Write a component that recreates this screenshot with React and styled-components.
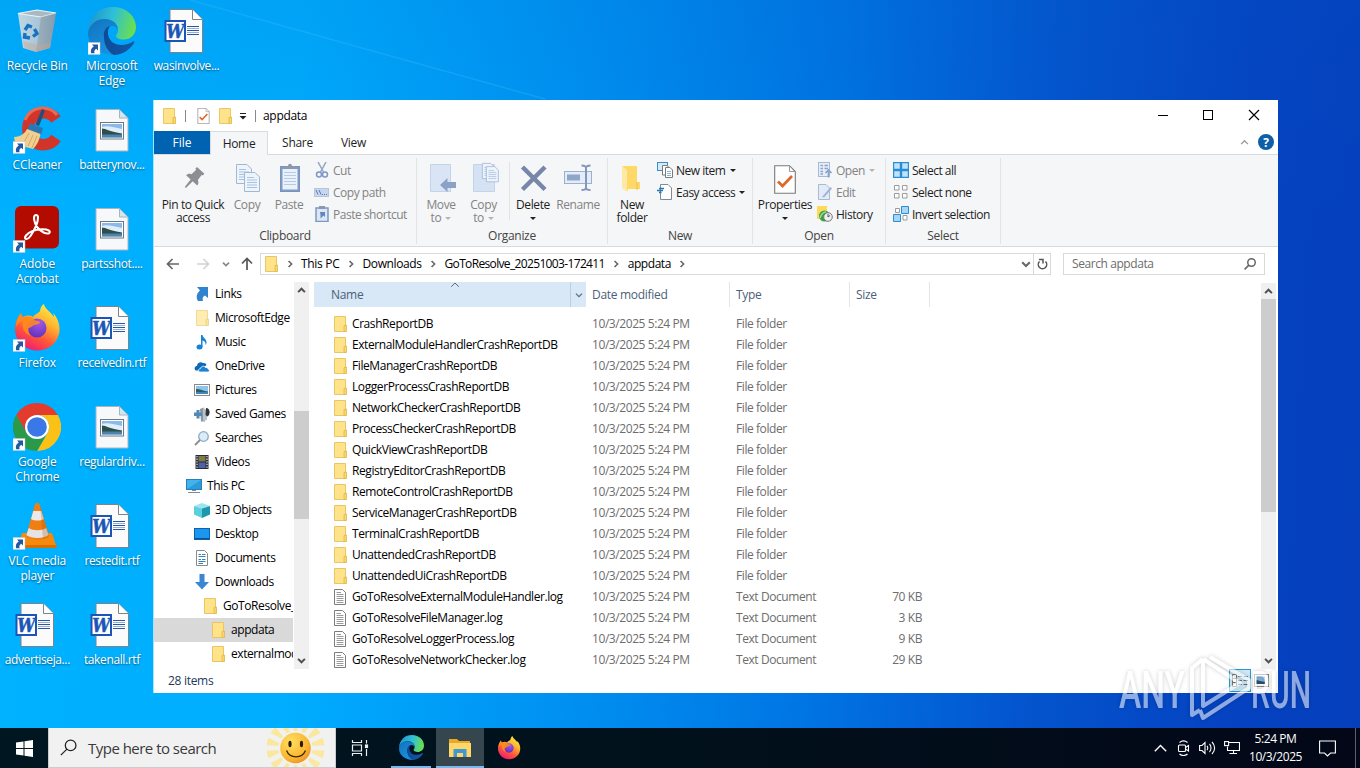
import React from 'react';
import styled, { createGlobalStyle, css } from 'styled-components';

const colors = {
  ribbon: '#f5f6f7',
  line: '#dadbdc',
  text: '#1e1e1e',
  muted: '#6d6d6d',
  disabled: '#838383',
  track: '#f0f0f0',
  thumb: '#cdcdcd',
  fileTab: '#0063b1',
};

const GlobalStyle = createGlobalStyle`
  * { box-sizing: border-box; }
  body {
    margin: 0;
    overflow: hidden;
    font-family: 'Open Sans', 'Noto Sans', sans-serif;
    font-size: 12px;
    letter-spacing: -0.42px;
  }
  svg { display: block; flex: none; }
`;

/* ---------- desktop ---------- */

const Screen = styled.div`
  position: relative;
  width: 1360px;
  height: 768px;
  overflow: hidden;
  display: flex;
  flex-direction: column;
  background:
    linear-gradient(180deg, rgba(0, 90, 190, 0.14), rgba(0, 90, 190, 0) 30%),
    linear-gradient(93deg, #00b2ff 0%, #00aeff 22%, #0092f2 42%, #0075e4 60%, #0454ce 76%, #0543c2 90%, #053fbc 100%);
`;

const Beam = styled.svg`
  position: absolute;
  left: 0;
  top: 0;
`;

const IconGrid = styled.div`
  flex: 1;
  display: grid;
  grid-template-rows: repeat(7, 99px);
  grid-auto-columns: 74.6px;
  grid-auto-flow: column;
  align-content: start;
`;

const DesktopItem = styled.div`
  display: flex;
  flex-direction: column;
  align-items: center;
  padding-top: 7px;
`;

const DesktopLabel = styled.div`
  margin-top: 3px;
  color: #fff;
  line-height: 15px;
  text-align: center;
  white-space: pre;
  letter-spacing: ${p => (p.$tight ? -0.38 : -0.15)}px;
  text-shadow: 0 1px 2px rgba(0, 0, 0, 0.55);
`;

/* ---------- window ---------- */

const Window = styled.div`
  position: absolute;
  left: 153px;
  top: 100px;
  width: 1125px;
  height: 593px;
  display: flex;
  flex-direction: column;
  background: #fff;
  border-left: 1px solid #a5e5ff;
  color: #000;
`;

const TitleBar = styled.div`
  height: 31px;
  display: flex;
  align-items: center;
  padding-left: 9px;
`;

const TitleSep = styled.div`
  width: 1px;
  height: 12px;
  background: #8a8a8a;
  margin: 0 ${p => p.$after}px 0 ${p => p.$before}px;
`;

const TitleText = styled.div`
  flex: 1;
  letter-spacing: -0.3px;
`;

const TabRow = styled.div`
  height: 24px;
  display: flex;
  border-bottom: 1px solid ${colors.line};
  color: ${colors.text};
`;

const Tab = styled.div`
  width: ${p => p.$width}px;
  line-height: 24px;
  text-align: center;
  letter-spacing: -0.3px;
  ${p =>
    p.$file &&
    css`
      height: 23px;
      background: ${colors.fileTab};
      color: #fff;
      letter-spacing: 0;
    `}
  ${p =>
    p.$active &&
    css`
      background: ${colors.ribbon};
      border: 1px solid ${colors.line};
      border-bottom: 0;
      line-height: 23px;
      height: 24px;
    `}
`;

const TabTools = styled.div`
  margin-left: auto;
  display: flex;
  align-items: center;
  gap: 9px;
  padding: 0 4px 1px 0;
`;

const Ribbon = styled.div`
  height: 92px;
  display: flex;
  background: ${colors.ribbon};
  border-bottom: 1px solid ${colors.line};
  padding-top: 3px;
`;

const Group = styled.div`
  width: ${p => p.$width}px;
  height: 86px;
  display: flex;
  flex-direction: column;
  border-right: 1px solid #e2e3e4;
`;

const GroupBody = styled.div`
  display: flex;
  height: 71px;
  padding-left: ${p => p.$pad}px;
`;

const GroupLabel = styled.div`
  text-align: center;
  line-height: 16px;
  padding-top: 2px;
  color: #444;
  letter-spacing: -0.3px;
`;

const BigButton = styled.div`
  width: ${p => p.$width}px;
  display: flex;
  flex-direction: column;
  align-items: center;
  padding-top: 4px;
  color: ${p => (p.$disabled ? colors.disabled : colors.text)};
`;

const BigLabel = styled.div`
  margin-top: 2px;
  line-height: 13px;
  white-space: pre;
  text-align: center;
  letter-spacing: -0.38px;
`;

const InnerSep = styled.div`
  width: 1px;
  height: 58px;
  margin: 4px 1px 0 4px;
  background: #e2e3e4;
`;

const SmallColumn = styled.div`
  display: flex;
  flex-direction: column;
  padding-top: 1px;
  margin-left: ${p => p.$left}px;
`;

const SmallButton = styled.div`
  height: 22px;
  display: flex;
  align-items: center;
  gap: 3px;
  white-space: nowrap;
  letter-spacing: -0.48px;
  color: ${p => (p.$disabled ? colors.disabled : colors.text)};
`;

const Caret = styled.span`
  display: inline-block;
  vertical-align: middle;
  border: 3px solid transparent;
  border-top-color: ${p => (p.$light ? '#b5b5b5' : '#222')};
  border-bottom: 0;
  margin-left: ${p => p.$left || 0}px;
`;

/* ---------- address bar ---------- */

const AddressRow = styled.div`
  height: 34px;
  display: flex;
  align-items: center;
`;

const NavButtons = styled.div`
  width: 106px;
  display: flex;
  align-items: center;
  padding-left: 12px;
`;

const AddressBox = styled.div`
  width: 791px;
  height: 22px;
  display: flex;
  align-items: center;
  border: 1px solid #d9d9d9;
  padding-left: 4px;
`;

const Crumb = styled.span`
  padding-bottom: 1px;
  letter-spacing: ${p => p.$spacing}px;
`;

const CrumbSep = styled.div`
  width: 23px;
  display: flex;
  justify-content: center;
`;

const AddressTools = styled.div`
  margin-left: auto;
  height: 20px;
  display: flex;
  align-items: center;
`;

const RefreshCell = styled.div`
  width: 17px;
  height: 20px;
  margin-left: 2px;
  display: flex;
  align-items: center;
  justify-content: center;
  border-left: 1px solid #d9d9d9;
`;

const SearchBox = styled.div`
  width: 202px;
  height: 22px;
  margin-left: 12px;
  padding: 0 8px 1px 8px;
  display: flex;
  align-items: center;
  justify-content: space-between;
  border: 1px solid #d9d9d9;
  color: ${colors.muted};
`;

/* ---------- content ---------- */

const Content = styled.div`
  height: 388px;
  padding-top: 1px;
  display: flex;
  overflow: hidden;
`;

const NavPane = styled.div`
  width: 139px;
  overflow: hidden;
`;

const NavRow = styled.div`
  height: 24px;
  display: flex;
  align-items: center;
  gap: ${p => (p.$folder ? 6 : 5)}px;
  white-space: nowrap;
  padding: 0 0 1px ${p => p.$indent}px;
  background: ${p => (p.$selected ? '#d9d9d9' : 'transparent')};
`;

const ScrollBar = styled.div`
  width: 15px;
  height: ${p => p.$height}px;
  margin: ${p => p.$top}px ${p => p.$right}px 0 ${p => p.$left}px;
  display: flex;
  flex-direction: column;
  justify-content: space-between;
  align-items: center;
  background:
    linear-gradient(${colors.thumb}, ${colors.thumb}) 0 ${p => p.$thumbTop}px / 15px ${p => p.$thumb}px no-repeat,
    ${colors.track};
  padding: 4px 0;
`;

const FilePane = styled.div`
  flex: 1;
  overflow: hidden;
`;

const HeaderRow = styled.div`
  height: 25px;
  display: flex;
  line-height: 25px;
  color: #4c607a;
  letter-spacing: -0.3px;
`;

const HeaderCell = styled.div`
  width: ${p => p.$width}px;
  padding-left: 6px;
  border-right: 1px solid #e5e5e5;
`;

const NameHeader = styled.div`
  width: 272px;
  display: flex;
  background: #d9e8f6;
  padding-left: 17px;
`;

const SortMark = styled.div`
  margin: -2px 0 0 87px;
`;

const NameDrop = styled.div`
  width: 16px;
  margin-left: auto;
  display: flex;
  align-items: center;
  justify-content: center;
  border-left: 1px solid #b9cfe4;
`;

const Rows = styled.div`
  padding-top: 6px;
`;

const FileRow = styled.div`
  height: 21px;
  display: grid;
  grid-template-columns: 18px 240px 144px 100px 86px;
  align-items: center;
  padding-left: 20px;
  white-space: nowrap;
  color: ${colors.muted};
`;

const FileName = styled.div`
  color: #000;
`;

const Size = styled.div`
  text-align: right;
`;

const StatusBar = styled.div`
  height: 24px;
  display: flex;
  align-items: center;
  padding: 0 8px 1px 14px;
  color: #1e395b;
  letter-spacing: -0.3px;
`;

const ViewButtons = styled.div`
  margin-left: auto;
  display: flex;
  align-items: center;
  gap: 2px;
`;

const ViewButton = styled.div`
  width: 22px;
  height: 23px;
  display: flex;
  align-items: center;
  justify-content: center;
  background: ${p => (p.$active ? '#cce8f6' : 'transparent')};
  border: ${p => (p.$active ? '1px solid #2e9ac4' : '0')};
  & + & { width: 17px; }
`;

/* ---------- taskbar ---------- */

const Taskbar = styled.div`
  height: 40px;
  display: flex;
  background: linear-gradient(90deg, #001620, #01111c 50%, #030717);
`;

const TaskButton = styled.div`
  width: ${p => p.$width || 49}px;
  height: 40px;
  display: flex;
  align-items: center;
  justify-content: center;
  background: ${p => (p.$active ? '#36464e' : 'transparent')};
`;

const RunningButton = styled(TaskButton)`
  border-bottom: 2px solid #76b9ed;
  padding-top: 1px;
`;

const TaskSearch = styled.div`
  width: 288px;
  display: flex;
  align-items: center;
  background: #f1f1f1;
  border: 1px solid #c9cdcf;
  border-top: 0;
  padding: 0 8px 0 11px;
  color: #3a3a3a;
  font-size: 15px;
  letter-spacing: -0.52px;
`;

const SearchText = styled.div`
  flex: 1;
  padding-left: 11px;
`;

const Tray = styled.div`
  margin-left: auto;
  display: flex;
  align-items: center;
`;

const TrayIcons = styled.div`
  display: flex;
  align-items: center;
  gap: 8px;
`;

const Clock = styled.div`
  width: 71px;
  color: #fff;
  line-height: 18px;
  text-align: center;
`;

const ShowDesktop = styled.div`
  width: 5px;
  height: 40px;
  margin-left: 18px;
  border-left: 1px solid #5a6070;
`;

const Watermark = styled.svg`
  position: absolute;
  left: 1112px;
  top: 650px;
  filter: drop-shadow(0 0 2px rgba(0, 0, 0, 0.35));
`;

/* ---------- drawings ---------- */

const Chevron = ({ dir = 'right', size = 6, color = '#666', width = 1.3 }) => {
  const turn = { right: 0, down: 90, left: 180, up: 270 }[dir];
  return (
    <svg width={size + 4} height={size + 4} viewBox="0 0 10 10">
      <path d="M3.2 1.2L7 5L3.2 8.8" transform={`rotate(${turn} 5 5)`} fill="none" stroke={color} strokeWidth={width} />
    </svg>
  );
};

const ShortcutMark = () => (
  <g>
    <rect x="0" y="35.5" width="12" height="12" fill="#fff" stroke="#b9c6d2" strokeWidth=".5" />
    <path d="M4 37.5H10V43.5L8.2 41.8C6.4 43 6 44.2 6.6 46.2H3.2C2.2 43.2 3.3 40.8 5.8 39.4z" fill="#23579f" />
  </g>
);

const RecycleBin = () => (
  <svg width="48" height="48" viewBox="0 0 48 48">
    <defs>
      <linearGradient id="bin" x2="1">
        <stop offset="0" stopColor="#d4dde3" />
        <stop offset=".55" stopColor="#bcc8d1" />
        <stop offset="1" stopColor="#84929f" />
      </linearGradient>
    </defs>
    <path d="M5 6.500L24 3L43 6L37 41L23 45L10 41z" fill="url(#bin)" opacity=".9" />
    <path d="M5 6.500L24 3L43 6L28 10z" fill="#a9b8c3" stroke="#edf3f6" strokeWidth="1.2" />
    <path d="M28 10L23 45L37 41L43 6z" fill="#8fa0ae" opacity=".6" />
    <path d="M10 34L11.500 41.500L23 45L37 41L38 36L24 37.500z" fill="#c9a58c" opacity=".4" />
    <g fill="none" stroke="#1673c4" strokeWidth="3.4">
      <path d="M12 23L15 18.500L19 20" />
      <path d="M21.500 22L24 26.500L20 29.500" />
      <path d="M17 31L11.500 30L12 26" />
    </g>
  </svg>
);

const EdgeShapes = () => (
  <g>
    <defs>
      <linearGradient id="edgeTop" x1="0" y1=".3" x2="1" y2=".5">
        <stop offset="0" stopColor="#1c94cf" />
        <stop offset=".5" stopColor="#2fc0d6" />
        <stop offset="1" stopColor="#6be04a" />
      </linearGradient>
      <linearGradient id="edgeBody" x1="0" y1="0" x2=".6" y2="1">
        <stop offset="0" stopColor="#1272bd" />
        <stop offset="1" stopColor="#1892e0" />
      </linearGradient>
      <linearGradient id="edgeDark" x2="1">
        <stop offset="0" stopColor="#0f4a98" />
        <stop offset="1" stopColor="#1359a6" />
      </linearGradient>
    </defs>
    <path d="M0 23C2 9 11 0 25 0C39 0 48 10 48 20C48 28 42 32.5 36 32.5C31 32.5 28 31 28 29C28 27 30 27 30 23C30 17 25 12 17 12C8 12 1 18 0 26z" fill="url(#edgeTop)" />
    <path d="M0 26C1 18 8 12 16 12C25 12 30 17 30 23C29 20 25 17.5 21 20C15 24 14 36 22 42C26 46 30 47 26 48C12 48 0 39 0 26z" fill="url(#edgeBody)" />
    <path d="M16 30C15 24 18 20 22 19C19 23 19 30 24 35C30 40 40 38 45 34.5C46 34 46.8 35 46 36C42 43 34 48 26 48C20 45 16 38 16 30z" fill="url(#edgeDark)" />
  </g>
);

const CCleaner = () => (
  <svg width="48" height="48" viewBox="0 0 48 48">
    <path d="M43 13.500A15.500 16 0 1 0 43 32" fill="none" stroke="#d2342a" strokeWidth="11.500" />
    <path d="M12 14A19 19.500 0 0 1 44 9" fill="none" stroke="#ea6a55" strokeWidth="3" />
    <path d="M29 3L32 4.500L26 20L22.500 18.500z" fill="#1e4f7d" />
    <path d="M17 17.500L30 22L28 29L14 24z" fill="#2b77b5" />
    <path d="M14 23L27.500 28C26 35 24 39 20 43L2 38C2 34 1 32 1 31C8 31 12 27 14 23z" fill="#f0cf91" />
    <path d="M16 27L10 38M20 29L15 40M24 30L19 42" stroke="#d1a868" fill="none" />
    <ShortcutMark />
  </svg>
);

const Acrobat = () => (
  <svg width="48" height="48" viewBox="0 0 48 48">
    <rect x="2" y="1" width="44" height="42.5" rx="6" fill="#b30b00" />
    <path d="M23 10C19.5 10 21 18 24.5 22.5C28 27 33.500 29.500 36 28.200C38.500 26.500 35 24 29 24.300C22 24.700 15.500 27.500 13 30.500C10 34.500 14.500 35.500 17.500 31C21.500 25 25 17 25 12.500C25 11 24.300 10 23 10z" fill="none" stroke="#fff" strokeWidth="2.1" />
    <ShortcutMark />
  </svg>
);

const FirefoxShapes = () => (
  <g>
    <defs>
      <linearGradient id="foxBody" x1=".8" y1="0" x2=".25" y2="1">
        <stop offset="0" stopColor="#fff04a" />
        <stop offset=".35" stopColor="#ffb52e" />
        <stop offset=".65" stopColor="#ff5a36" />
        <stop offset="1" stopColor="#f0147a" />
      </linearGradient>
      <radialGradient id="foxGlobe" cx=".6" cy=".2" r=".9">
        <stop offset="0" stopColor="#a557e8" />
        <stop offset="1" stopColor="#5a2fb8" />
      </radialGradient>
    </defs>
    <path d="M8 9C8 11 9 12 10 13C13 11 18 11 20 13C22 10 26 9 27 7C27 4 29 1 31 0C31 4 38 8 41 13C41 11 40.500 10 40 9C44 13 46.500 19 46.500 25C46.500 38 36 46.500 24.500 46.500C12 46.500 2 37 2 25C2 18 5 13 8 9z" fill="url(#foxBody)" />
    <circle cx="24" cy="24" r="9.500" fill="url(#foxGlobe)" />
    <path d="M8 9C8 12 10 14 13 13C17 12 20 13 22 16.500C25 16.500 27 17.500 27 18.500C26 20.500 22 20.500 20 21.500C19 23 17 24 15.500 24C15 27 16 30 18 32C13 30 10.500 27 10 24C9 20 10 18 10 17C8 17 4 20 3 23C3 17 5 12 8 9z" fill="#ff8a1e" opacity=".9" />
  </g>
);

const Chrome = () => (
  <svg width="48" height="48" viewBox="0 0 48 48">
    <path d="M24 12H44.8A24 24 0 0 0 3.2 12L13.6 30z" fill="#e33b2e" />
    <path d="M44.8 12A24 24 0 0 1 24 48L34.4 30A12 12 0 0 0 24 12z" fill="#fbc116" />
    <path d="M3.2 12A24 24 0 0 0 24 48L34.4 30A12 12 0 0 1 13.6 30z" fill="#2a9a48" />
    <circle cx="24" cy="24" r="12" fill="#fff" />
    <circle cx="24" cy="24" r="9.800" fill="#3b78e7" />
    <ShortcutMark />
  </svg>
);

const Vlc = () => (
  <svg width="48" height="48" viewBox="0 0 48 48">
    <path d="M9 31H39L43.500 45H5z" fill="#f58a0c" />
    <path d="M5 43H43.500V46H5z" fill="#d96f00" />
    <path d="M22 2C23 .8 25.500 .8 26.500 2L36 34C33 39 16 39 13 34z" fill="#f07f13" />
    <path d="M20.300 9H28.300L30.800 17C28 19 21 19 18 17z" fill="#e9e9e9" />
    <path d="M15.800 26C20 29 29 29 33.200 26L35.500 33C31 37 18 37 13.300 33z" fill="#e4e4e4" />
    <path d="M27 3L36 34C34 36 31 37 30 37z" fill="#a85000" opacity=".25" />
    <ShortcutMark />
  </svg>
);

const WordDoc = () => (
  <svg width="48" height="48" viewBox="0 0 48 48">
    <path d="M8 2.500H30.500L40.500 12.500V45.500H8z" fill="#fbfbfb" stroke="#7d8388" />
    <path d="M30.500 2.500V12.500H40.500" fill="#fff" stroke="#7d8388" />
    <path d="M25 19.500H37M25 23.500H37M25 27.500H37" stroke="#2757a8" />
    <path d="M25 21.500H37M25 25.500H37" stroke="#7f9ccb" strokeWidth=".8" />
    <rect x="3.500" y="14" width="19.500" height="20" fill="#fff" stroke="#1b55b5" strokeWidth="2" />
    <text x="13.300" y="30.800" textAnchor="middle" fontFamily="DejaVu Serif, serif" fontSize="18" fontStyle="italic" fontWeight="bold" letterSpacing="0" textLength="18" lengthAdjust="spacingAndGlyphs" fill="#1b55b5" stroke="#1b55b5" strokeWidth=".5">W</text>
  </svg>
);

const ImageDoc = () => (
  <svg width="48" height="48" viewBox="0 0 48 48">
    <path d="M8 3.500H31.500L40 12V45H8z" fill="#f7f8f9" stroke="#a9b4bc" />
    <path d="M31.500 3.500V12H40z" fill="#cfe6f5" stroke="#a9b4bc" />
    <rect x="12.500" y="16.500" width="23" height="16.500" fill="#fff" stroke="#6a7784" />
    <rect x="14" y="18" width="20" height="13.500" fill="#8ab9ea" />
    <path d="M14 21C18 19 26 21 34 23V28H14z" fill="#dfeefa" />
    <path d="M14 22.500C18 22.500 22 26 34 27.500V29H14z" fill="#2d4f4c" />
    <path d="M14 28.500H34V31.500H14z" fill="#4d83ad" />
  </svg>
);

const Folder = ({ faded }) => (
  <svg width="13" height="16" viewBox="0 0 13 16" opacity={faded ? 0.65 : 1}>
    <path d="M.5 .5H11.500V15.500H.5z" fill="#ffe38a" stroke="#e9c664" />
    <path d="M10 9.500L12.500 9V15.500H10z" fill="#fbd768" stroke="#dfb64a" strokeWidth=".8" />
  </svg>
);

const TextFile = () => (
  <svg width="13" height="16" viewBox="0 0 13 16">
    <path d="M.5 .5H8.500L11.500 3.500V15.500H.5z" fill="#fff" stroke="#7c7c7c" />
    <path d="M2.500 3.500H7M2.500 5.500H9.500M2.500 7.500H9.500M2.500 9.500H9.500M2.500 11.500H9.500M2.500 13.500H9.500" stroke="#9a9a9a" />
  </svg>
);

const CheckedPage = ({ width, height }) => (
  <svg width={width} height={height} viewBox="0 0 22 29">
    <path d="M.7 .7H15.500L21.300 6.500V28.300H.7z" fill="#fff" stroke="#7a7a7a" strokeWidth="1.1" />
    <path d="M15.500 .7V6.500H21.300" fill="none" stroke="#9a9a9a" />
    <path d="M4 16.500L8.500 21L18 11" fill="none" stroke="#e0672b" strokeWidth="2.700" />
  </svg>
);

const Page = ({ x, y }) => (
  <g transform={`translate(${x} ${y})`}>
    <path d="M.5 .5H11L15.500 5V19.500H.5z" fill="#eef4fb" stroke="#a3b6d3" />
    <path d="M3 5.500H10M3 8H13M3 10.500H13M3 13H13M3 15.500H13" stroke="#a9c2e2" />
  </g>
);

const bigIcons = {
  pin: (
    <g fill="#8b8f94" transform="rotate(42 15 18) translate(-1 0)">
      <path d="M11 5H21V7.500H19.800L20.300 14C22.500 15 23.500 16.500 23.500 18.500H8.500C8.500 16.500 9.500 15 11.700 14L12.200 7.500H11z" />
      <path d="M14.600 18H17.400L16.700 28H15.300z" />
    </g>
  ),
  copy: (
    <g>
      <Page x={5} y={2} />
      <Page x={13} y={10} />
    </g>
  ),
  paste: (
    <g>
      <rect x="7.500" y="4.500" width="19" height="25" fill="#7f9bc7" stroke="#7b93bb" />
      <rect x="9.500" y="7" width="15" height="20.500" fill="#e9f1fa" />
      <path d="M12 7V4H15C15 1 19 1 19 4H22V7z" fill="#8c99ad" />
      <path d="M11 10.500H23M11 13.500H23M11 16.500H23M11 19.500H23M11 22.500H23" stroke="#b5cae5" />
    </g>
  ),
  moveTo: (
    <g>
      <path d="M5.500 2.500H25.500V29.500H5.500z" fill="#d9e5f4" stroke="#c3d4ea" />
      <path d="M15 23L22.500 16V20H31V26H22.500V30z" fill="#8ba2c6" />
    </g>
  ),
  copyTo: (
    <g>
      <path d="M5.500 2.500H26.500V29.500H5.500z" fill="#d4e2f3" stroke="#c3d4ea" />
      <g transform="translate(14 1) scale(.8)">
        <Page x={0} y={0} />
        <Page x={5} y={4} />
      </g>
    </g>
  ),
  remove: <path d="M5.500 5L28 27.500M28 5L5.500 27.500" stroke="#7787a8" strokeWidth="4.500" />,
  rename: (
    <g fill="none" stroke="#9db0d0">
      <rect x="2.500" y="9.500" width="27" height="12" fill="#e3ecf7" />
      <rect x="5" y="12.500" width="13" height="6" fill="#8fa6cb" stroke="none" />
      <path d="M19.500 3.500C22 3.500 24 4 24 6C24 4 26 3.500 28.500 3.500M24 5V26M19.500 28C22 28 24 27.500 24 25.500C24 27.500 26 28 28.500 28" stroke="#8297bb" strokeWidth="2" />
    </g>
  ),
  newFolder: (
    <g transform="translate(-1 0)">
      <path d="M7 4H22V20H25V27H13V29L7 26z" fill="#ffd968" />
      <path d="M7 4L12 8V30L7 26z" fill="#ffe9a5" />
      <path d="M22 20V28" stroke="#efbf45" />
    </g>
  ),
};

const BigIcon = ({ name }) => (
  <svg width="32" height="34" viewBox="0 0 32 34">
    {name === 'properties' ? (
      <g transform="translate(5 3)">
        <CheckedPage width={22} height={29} />
      </g>
    ) : (
      bigIcons[name]
    )}
  </svg>
);

const smallIcons = {
  cut: (
    <g fill="none" stroke="#93a4c3" strokeWidth="1.500">
      <path d="M4 0L9.500 10M12 0L6.500 10" />
      <circle cx="5" cy="12.500" r="2.500" stroke="#7f98cb" />
      <circle cx="11" cy="12.500" r="2.500" stroke="#7f98cb" />
    </g>
  ),
  copyPath: (
    <g>
      <rect x=".5" y="4.500" width="14" height="8" fill="#c9d7ee" stroke="#b4c4e2" />
      <path d="M2 6L4 10.500M5 6L7 10.500M8 10.500H9M10 10.500H11M12 10.500H13" stroke="#5d79ad" />
    </g>
  ),
  shortcut: (
    <g>
      <rect x="2" y="2" width="12" height="13.500" fill="#dce7f5" stroke="#7d97c3" strokeWidth="1.500" />
      <rect x="5" y="0" width="6" height="3" fill="#8c99ad" />
      <path d="M6 6H11V11L9.500 9.500L6.500 12.500V9z" fill="#6585bd" />
    </g>
  ),
  newItem: (
    <g fill="#fff">
      <rect x=".5" y=".5" width="10" height="8" fill="#d5ebf8" stroke="#3c8fc4" />
      <path d="M5.500 3.500H10L12.500 6V13H5.500z" stroke="#7a7a7a" />
      <path d="M8.500 5.500H13L15.500 8V15.500H8.500z" stroke="#7a7a7a" />
      <path d="M10 9.500H14M10 11.500H14M10 13.500H14" stroke="#8fb0cf" />
    </g>
  ),
  easy: (
    <g>
      <path d="M3.500 .5H11L14.500 4V15.500H3.500z" fill="#fff" stroke="#7e8b97" />
      <path d="M2 4.500H7M0 6.500H6M2 8.500H4.500" stroke="#2578b8" strokeWidth="1.300" />
    </g>
  ),
  open: (
    <g>
      <rect x="1.500" y=".5" width="11" height="14" fill="#e6edf7" stroke="#a7b9d6" />
      <path d="M3.500 3.500H6M7.500 3.500H11M3.500 6.500H6M7.500 6.500H11M3.500 9.500H6M3.500 12H6" stroke="#8ba3cb" strokeWidth="1.500" />
      <path d="M11.500 15.500V8.500M8.500 11L11.500 8L14.500 11" stroke="#8ba3cb" strokeWidth="1.700" fill="none" />
    </g>
  ),
  edit: (
    <g>
      <path d="M1.500 .5H9L12.500 4V15.500H1.500z" fill="#e2ebf7" stroke="#a7b9d6" />
      <path d="M5 13L13.500 3L15 4.500L7 13.500z" fill="#9fb4d6" />
    </g>
  ),
  history: (
    <g>
      <path d="M0 0H10V13H0z" fill="#ffd95a" />
      <circle cx="7.500" cy="10" r="5.500" fill="#37a34a" />
      <circle cx="11" cy="11" r="4.300" fill="#f0f0f0" stroke="#777" />
      <path d="M11 8V11L13 9.500" stroke="#555" fill="none" />
      <path d="M3 12C4 9 6 6 9 6" stroke="#a4e08a" strokeWidth="1.500" fill="none" />
    </g>
  ),
  all: (
    <g fill="#bfe3fb" stroke="#2a8dd4" strokeWidth="1.200">
      <path d="M.6 .6H7.400V7.400H.6zM8.600 .6H15.400V7.400H8.600zM.6 8.600H7.400V15.400H.6zM8.600 8.600H15.400V15.400H8.600z" />
    </g>
  ),
  none: <path d="M1.500 1.500H6V6H1.500zM9.500 1.500H14V6H9.500zM1.500 9.500H6V14H1.500zM9.500 9.500H14V14H9.500z" fill="#fff" stroke="#9a9a9a" />,
  invert: (
    <g>
      <path d="M2.500 2.500H6.500V6.500H2.500zM10 9.500H14V14H10z" fill="#fff" stroke="#9a9a9a" />
      <path d="M8.500 .5H15.500V7.500H8.500zM.5 8.500H7.500V15.500H.5z" fill="#a5d6f7" stroke="#2a8dd4" />
    </g>
  ),
};

const navIcons = {
  links: <path d="M3 1H14V12L11 9.500C9 10.500 8 12 9 15H4C1.500 11 3 7 6 4.500z" fill="#2f83cf" />,
  music: (
    <g fill="#1584d8">
      <ellipse cx="5.500" cy="13" rx="3" ry="2.500" />
      <path d="M7 1H8.500C9 4 13 5 12.500 9C12 11 11.500 11 11.500 10.500C12 8 10 7 8.500 6.500V13H7z" />
    </g>
  ),
  cloud: (
    <g>
      <path d="M1 12C0 9.500 1.500 8 3 8C3 5 6.500 3 9 5C11 4.500 12.500 6 12.500 7L6 12.500H2z" fill="#0d6ab8" />
      <path d="M6 14C4 14 4 10.500 6.500 10.500C7 8 10.500 7.500 11.500 9.500C14 9.500 14 10.500 14 11C16 11.500 15.500 14 14 14z" fill="#1b82d4" stroke="#fff" strokeWidth=".8" />
    </g>
  ),
  picture: (
    <g>
      <rect x=".5" y="2.500" width="15" height="11" fill="#fff" stroke="#8a8a8a" />
      <rect x="2" y="4" width="12" height="8" fill="#8ec3ee" />
      <path d="M2 7C5 6.500 9 9 14 9.500V10.500H2z" fill="#2b5f63" />
      <path d="M2 10H14V12H2z" fill="#3f86bb" />
    </g>
  ),
  games: (
    <g>
      <path d="M6 3L10 1.500L11 15.500H7z" fill="#8796a3" />
      <path d="M9 2L13 4V14L9 15z" fill="#b8c4cd" />
      <path d="M12 2C16.500 2 16.500 9 13.500 10.500L11.500 9z" fill="#333" />
      <path d="M0 6.500H2.500V4H5.500V6.500H8V10H5.500V12.500H2.500V10H0z" fill="#5588b5" />
    </g>
  ),
  search: (
    <g>
      <circle cx="9.500" cy="6.500" r="4.800" fill="#d8ecf9" stroke="#93a9bb" strokeWidth="1.300" />
      <path d="M6 10L1 15" stroke="#8c8c8c" strokeWidth="1.800" />
    </g>
  ),
  video: (
    <g>
      <rect x="1.500" y="1" width="13" height="14" fill="#2b2b38" />
      <path d="M3 2V15M13 2V15" stroke="#e8e8e8" strokeWidth="1.200" strokeDasharray="1.300 1.300" />
      <rect x="4.500" y="2" width="7" height="5.500" fill="#7d7c46" />
      <rect x="4.500" y="8.500" width="7" height="5.500" fill="#4d62a8" />
    </g>
  ),
  pc: (
    <g>
      <rect x=".5" y="1.500" width="15" height="10" fill="#43b3ee" stroke="#2a7fb3" />
      <path d="M1 11L15 2V11z" fill="#2b9be0" />
      <path d="M2 14.500H14M6 12.500H10" stroke="#7e8d99" />
    </g>
  ),
  cube: (
    <g>
      <path d="M0 4L8 1L16 4L8 6.500z" fill="#9be6ee" />
      <path d="M0 4L8 6.500V16L0 12.500z" fill="#5ccfdd" />
      <path d="M16 4L8 6.500V16L16 12.500z" fill="#1c97ae" />
    </g>
  ),
  desktop: (
    <g>
      <rect x=".5" y="2.500" width="15" height="11" fill="#1b97f0" stroke="#0c63ad" />
      <path d="M1 12.500H15" stroke="#0f4f8c" />
    </g>
  ),
  doc: (
    <g>
      <path d="M2.500 .5H10.500L13.500 3.500V15.500H2.500z" fill="#fff" stroke="#8a8a8a" />
      <path d="M4.500 4.500H7M8 4.500H11.500M4.500 6.500H11.500M4.500 9.500H7M8 9.500H11.500M4.500 11.500H11.500M4.500 13.500H9" stroke="#3a7fb8" />
    </g>
  ),
  down: <path d="M5.500 0H10.500V8H15L8 15.500L1 8H5.500z" fill="#3a86d3" />,
};

const SmallIcon = ({ art }) => (
  <svg width="16" height="16" viewBox="0 0 16 16">
    {art}
  </svg>
);

const Arrow = ({ turn, color }) => (
  <svg width="14" height="14" viewBox="0 0 14 14">
    <path d="M13 7H1.800M6.500 2L1.500 7L6.500 12" transform={`rotate(${turn} 7 7)`} fill="none" stroke={color} strokeWidth="1.700" />
  </svg>
);

const Sun = () => (
  <svg width="60" height="39" viewBox="0 0 60 39">
    <defs>
      <radialGradient id="sun" cx=".35" cy=".3" r=".8">
        <stop offset="0" stopColor="#ffdf62" />
        <stop offset=".7" stopColor="#fbb52d" />
        <stop offset="1" stopColor="#e98a22" />
      </radialGradient>
    </defs>
    {[...Array(14).keys()].map(i => (
      <path key={i} d="M27 3L24.500 -9H32.500L30 3z" fill="#fbe8a0" transform={`rotate(${i * (360 / 14)} 28.500 20)`} />
    ))}
    <circle cx="28.500" cy="20" r="15.300" fill="url(#sun)" />
    <ellipse cx="23" cy="16" rx="1.600" ry="3.200" fill="#2a1b05" />
    <ellipse cx="34.500" cy="16" rx="1.600" ry="3.200" fill="#2a1b05" />
    <path d="M19.500 22.500C23 31 35 31 38.500 22.500" fill="none" stroke="#3a2408" strokeWidth="1.300" />
  </svg>
);

/* ---------- data ---------- */

const desktopItems = [
  { label: 'Recycle Bin', icon: <RecycleBin /> },
  { label: 'CCleaner', icon: <CCleaner /> },
  { label: 'Adobe\nAcrobat', icon: <Acrobat /> },
  { label: 'Firefox', icon: <svg width="48" height="48"><FirefoxShapes /><ShortcutMark /></svg> },
  { label: 'Google\nChrome', icon: <Chrome /> },
  { label: 'VLC media\nplayer', icon: <Vlc /> },
  { label: 'advertiseja...', icon: <WordDoc />, tight: true },
  { label: 'Microsoft\nEdge', icon: <svg width="48" height="48"><EdgeShapes /><ShortcutMark /></svg> },
  { label: 'batterynov...', icon: <ImageDoc />, tight: true },
  { label: 'partsshot....', icon: <ImageDoc />, tight: true },
  { label: 'receivedin.rtf', icon: <WordDoc />, tight: true },
  { label: 'regulardriv...', icon: <ImageDoc />, tight: true },
  { label: 'restedit.rtf', icon: <WordDoc />, tight: true },
  { label: 'takenall.rtf', icon: <WordDoc />, tight: true },
  { label: 'wasinvolve...', icon: <WordDoc />, tight: true },
];

const navItems = [
  { label: 'Links', art: navIcons.links, indent: 40 },
  { label: 'MicrosoftEdge', folder: true, faded: true, indent: 42 },
  { label: 'Music', art: navIcons.music, indent: 40 },
  { label: 'OneDrive', art: navIcons.cloud, indent: 40 },
  { label: 'Pictures', art: navIcons.picture, indent: 40 },
  { label: 'Saved Games', art: navIcons.games, indent: 40 },
  { label: 'Searches', art: navIcons.search, indent: 40 },
  { label: 'Videos', art: navIcons.video, indent: 40 },
  { label: 'This PC', art: navIcons.pc, indent: 32 },
  { label: '3D Objects', art: navIcons.cube, indent: 40 },
  { label: 'Desktop', art: navIcons.desktop, indent: 40 },
  { label: 'Documents', art: navIcons.doc, indent: 40 },
  { label: 'Downloads', art: navIcons.down, indent: 40 },
  { label: 'GoToResolve_', folder: true, indent: 50 },
  { label: 'appdata', folder: true, selected: true, indent: 58 },
  { label: 'externalmodule', folder: true, indent: 58 },
];

const folders = [
  'CrashReportDB',
  'ExternalModuleHandlerCrashReportDB',
  'FileManagerCrashReportDB',
  'LoggerProcessCrashReportDB',
  'NetworkCheckerCrashReportDB',
  'ProcessCheckerCrashReportDB',
  'QuickViewCrashReportDB',
  'RegistryEditorCrashReportDB',
  'RemoteControlCrashReportDB',
  'ServiceManagerCrashReportDB',
  'TerminalCrashReportDB',
  'UnattendedCrashReportDB',
  'UnattendedUiCrashReportDB',
];

const logs = [
  ['GoToResolveExternalModuleHandler.log', '70 KB'],
  ['GoToResolveFileManager.log', '3 KB'],
  ['GoToResolveLoggerProcess.log', '9 KB'],
  ['GoToResolveNetworkChecker.log', '29 KB'],
];

const files = [
  ...folders.map(name => ({ name, type: 'File folder', icon: <Folder /> })),
  ...logs.map(([name, size]) => ({ name, size, type: 'Text Document', icon: <TextFile /> })),
];

const crumbs = [
  { name: 'This PC', spacing: -0.3 },
  { name: 'Downloads', spacing: -0.4 },
  { name: 'GoToResolve_20251003-172411', spacing: -0.65 },
  { name: 'appdata', spacing: -0.45 },
];

/* ---------- sections ---------- */

const Big = ({ width, icon, label, disabled, caret }) => (
  <BigButton $width={width} $disabled={disabled}>
    <BigIcon name={icon} />
    <BigLabel>
      {label}
      {caret && <Caret $light={disabled} $left={disabled ? 4 : 0} />}
    </BigLabel>
  </BigButton>
);

const Small = ({ icon, label, disabled, caret }) => (
  <SmallButton $disabled={disabled}>
    <SmallIcon art={smallIcons[icon]} />
    <span>{label}</span>
    {caret && <Caret $light={disabled} $left={1} />}
  </SmallButton>
);

function RibbonBar() {
  return (
    <Ribbon>
      <Group $width={263}>
        <GroupBody $pad={6}>
          <Big width={66} icon="pin" label={'Pin to Quick\naccess'} />
          <Big width={42} icon="copy" label="Copy" disabled />
          <Big width={42} icon="paste" label="Paste" disabled />
          <SmallColumn $left={4}>
            <Small icon="cut" label="Cut" disabled />
            <Small icon="copyPath" label="Copy path" disabled />
            <Small icon="shortcut" label="Paste shortcut" disabled />
          </SmallColumn>
        </GroupBody>
        <GroupLabel>Clipboard</GroupLabel>
      </Group>
      <Group $width={191}>
        <GroupBody $pad={3}>
          <Big width={42} icon="moveTo" label={'Move\nto'} disabled caret />
          <Big width={43} icon="copyTo" label={'Copy\nto'} disabled caret />
          <InnerSep />
          <Big width={44} icon="remove" label={'Delete\n'} caret />
          <Big width={46} icon="rename" label="Rename" disabled />
        </GroupBody>
        <GroupLabel>Organize</GroupLabel>
      </Group>
      <Group $width={145}>
        <GroupBody $pad={4}>
          <Big width={40} icon="newFolder" label={'New\nfolder'} />
          <SmallColumn $left={5}>
            <Small icon="newItem" label="New item" caret />
            <Small icon="easy" label="Easy access" caret />
          </SmallColumn>
        </GroupBody>
        <GroupLabel>New</GroupLabel>
      </Group>
      <Group $width={133}>
        <GroupBody $pad={4}>
          <Big width={56} icon="properties" label={'Properties\n'} caret />
          <SmallColumn $left={4}>
            <Small icon="open" label="Open" disabled caret />
            <Small icon="edit" label="Edit" disabled />
            <Small icon="history" label="History" />
          </SmallColumn>
        </GroupBody>
        <GroupLabel>Open</GroupLabel>
      </Group>
      <Group $width={115}>
        <GroupBody $pad={7}>
          <SmallColumn $left={0}>
            <Small icon="all" label="Select all" />
            <Small icon="none" label="Select none" />
            <Small icon="invert" label="Invert selection" />
          </SmallColumn>
        </GroupBody>
        <GroupLabel>Select</GroupLabel>
      </Group>
    </Ribbon>
  );
}

const WindowControls = () => (
  <svg width="136" height="31" viewBox="0 0 136 31" fill="none" stroke="#000" shapeRendering="crispEdges">
    <path d="M16 15.500H26" />
    <rect x="61.500" y="10.500" width="9" height="9" />
    <path d="M107 10L117 20M117 10L107 20" shapeRendering="auto" strokeWidth="1.200" />
  </svg>
);

const Magnifier = ({ size, color, width }) => (
  <svg width={size} height={size} viewBox="0 0 16 16" fill="none" stroke={color} strokeWidth={width}>
    <circle cx="10" cy="6" r="5" />
    <path d="M6.500 9.500L.8 15.200" />
  </svg>
);

function AddressBar() {
  return (
    <AddressRow>
      <NavButtons>
        <Arrow turn={0} color="#666" />
        <svg width="16" height="1" />
        <Arrow turn={180} color="#d2d2d2" />
        <svg width="12" height="1" />
        <Chevron dir="down" size={4} color="#888" width={2} />
        <svg width="10" height="1" />
        <Arrow turn={90} color="#555" />
      </NavButtons>
      <AddressBox>
        <Folder />
        <CrumbSep><Chevron size={4} width={2} /></CrumbSep>
        {crumbs.map(({ name, spacing }) => (
          <React.Fragment key={name}>
            <Crumb $spacing={spacing}>{name}</Crumb>
            <CrumbSep><Chevron size={4} width={2} /></CrumbSep>
          </React.Fragment>
        ))}
        <AddressTools>
          <Chevron dir="down" size={6} width={2} />
          <RefreshCell>
            <svg width="11" height="12" viewBox="0 0 11 12" fill="none" stroke="#555" strokeWidth="1.500">
              <path d="M2.500 3.500A4.200 4.200 0 1 0 8.500 3.500M2 1.500H6V5.500" />
            </svg>
          </RefreshCell>
        </AddressTools>
      </AddressBox>
      <SearchBox>
        Search appdata
        <Magnifier size={12} color="#666" width={2} />
      </SearchBox>
    </AddressRow>
  );
}

const Scroll = props => (
  <ScrollBar {...props}>
    <Chevron dir="up" size={5} color="#505050" width={2.2} />
    <Chevron dir="down" size={5} color="#505050" width={2.2} />
  </ScrollBar>
);

function Explorer() {
  return (
    <Window>
      <TitleBar>
        <Folder />
        <TitleSep $before={9} $after={11} />
        <CheckedPage width={13} height={16} />
        <svg width="9" height="1" />
        <Folder />
        <svg width="7" height="8" />
        <svg width="8" height="8" viewBox="0 0 8 8">
          <path d="M1 1.500H7" stroke="#222" />
          <path d="M.5 4H7.500L4 7.500z" fill="#222" />
        </svg>
        <TitleSep $before={8} $after={7} />
        <TitleText>appdata</TitleText>
        <WindowControls />
      </TitleBar>
      <TabRow>
        <Tab $width={56} $file>File</Tab>
        <Tab $width={58} $active>Home</Tab>
        <Tab $width={59}>Share</Tab>
        <Tab $width={53}>View</Tab>
        <TabTools>
          <Chevron dir="up" size={5} color="#999" width={1.5} />
          <svg width="16" height="16" viewBox="0 0 16 16">
            <circle cx="8" cy="8" r="8" fill="#0f5fa8" />
            <text x="8" y="12.500" textAnchor="middle" fontSize="12" fontWeight="700" letterSpacing="0" fill="#fff">?</text>
          </svg>
        </TabTools>
      </TabRow>
      <RibbonBar />
      <AddressBar />
      <Content>
        <NavPane>
          {navItems.map(item => (
            <NavRow key={item.label} $indent={item.indent} $selected={item.selected} $folder={item.folder}>
              {item.folder ? <Folder faded={item.faded} /> : <SmallIcon art={item.art} />}
              {item.label}
            </NavRow>
          ))}
        </NavPane>
        <Scroll $height={387} $top={0} $left={1} $right={5} $thumbTop={129} $thumb={108} />
        <FilePane>
          <HeaderRow>
            <NameHeader>
              Name
              <SortMark><Chevron dir="up" size={6} color="#5a6b7d" width={1} /></SortMark>
              <NameDrop><Chevron dir="down" size={4} color="#5a6b7d" width={1.5} /></NameDrop>
            </NameHeader>
            <HeaderCell $width={144}>Date modified</HeaderCell>
            <HeaderCell $width={120}>Type</HeaderCell>
            <HeaderCell $width={80}>Size</HeaderCell>
          </HeaderRow>
          <Rows>
            {files.map(file => (
              <FileRow key={file.name}>
                {file.icon}
                <FileName>{file.name}</FileName>
                <div>10/3/2025 5:24 PM</div>
                <div>{file.type}</div>
                <Size>{file.size}</Size>
              </FileRow>
            ))}
          </Rows>
        </FilePane>
        <Scroll $height={386} $top={1} $left={0} $right={2} $thumbTop={16} $thumb={213} />
      </Content>
      <StatusBar>
        28 items
        <ViewButtons>
          <ViewButton $active>
            <svg width="16" height="14" viewBox="0 0 16 14">
              <path d="M.5 .5H4.500V12.500H.5zM.5 4.500H4.500M.5 8.500H4.500" fill="#fff" stroke="#777" />
              <path d="M6 2.500H10M11.500 2.500H16M6 6.500H10M11.500 6.500H16M6 10.500H10M11.500 10.500H16" stroke="#667" />
            </svg>
          </ViewButton>
          <ViewButton>
            <svg width="15" height="13" viewBox="0 0 15 13">
              <rect x=".5" y=".5" width="14" height="12" fill="#fff" stroke="#888" />
              <path d="M2 2.500H11V10H2z" fill="#7db2e0" />
              <path d="M2 6L11 8V10H2z" fill="#2c4f66" />
            </svg>
          </ViewButton>
        </ViewButtons>
      </StatusBar>
    </Window>
  );
}

function TaskBar() {
  return (
    <Taskbar>
      <TaskButton $width={48}>
        <svg width="17" height="17" viewBox="0 0 17 17" fill="#fff">
          <path d="M0 2.500L7.500 1.400V8H0zM8.500 1.300L17 0V8H8.500zM0 9H7.500V15.600L0 14.500zM8.500 9H17V17L8.500 15.700z" />
        </svg>
      </TaskButton>
      <TaskSearch>
        <Magnifier size={17} color="#222" width={1.2} />
        <SearchText>Type here to search</SearchText>
        <Sun />
      </TaskSearch>
      <TaskButton $width={48}>
        <svg width="18" height="16" viewBox="0 0 18 16" fill="none" stroke="#e8eef2" strokeWidth="1.200">
          <path d="M1.500 0V2.500H10.500V0M1.500 16V13.500H10.500V16M1.500 5H10.500V11H1.500zM15.500 0V3.500M15.500 9V16" />
          <rect x="14.500" y="5" width="2" height="2.500" fill="#fff" />
        </svg>
      </TaskButton>
      <svg width="7" height="1" />
      <RunningButton $width={40}>
        <svg width="25" height="25" viewBox="0 0 48 48"><EdgeShapes /></svg>
      </RunningButton>
      <svg width="5" height="1" />
      <RunningButton $width={48} $active>
        <svg width="22" height="20" viewBox="0 0 22 20">
          <path d="M0 1H8L10 3H21V19H0z" fill="#e9a825" />
          <path d="M0 5H22V19H0z" fill="#ffd768" />
          <path d="M4.500 19V11H17.500V19H14V15H8V19z" fill="#3f97d3" />
        </svg>
      </RunningButton>
      <TaskButton>
        <svg width="24" height="24" viewBox="0 0 48 48"><FirefoxShapes /></svg>
      </TaskButton>
      <Tray>
        <TrayIcons>
          <Chevron dir="up" size={11} color="#fff" width={0.9} />
          <svg width="15" height="16" viewBox="0 0 15 16" fill="none" stroke="#fff" strokeWidth="1.100">
            <rect x="2.500" y="5" width="7" height="6.500" rx="1" />
            <path d="M9.500 7.500L12.500 5.500V11L9.500 9M3.500 2.500C6 .5 9 .5 11.500 2.500M3.500 14C6 16 9 16 11.500 14" />
          </svg>
          <svg width="17" height="14" viewBox="0 0 17 14" fill="none" stroke="#fff" strokeWidth="1.100">
            <path d="M.6 4.500H3L6 1.500V12.500L3 9.500H.6zM8 5C9 6 9 8 8 9M10.500 3C12.500 5 12.500 9 10.500 11M13 1C16.500 4.500 16.500 9.500 13 13" />
          </svg>
          <svg width="16" height="14" viewBox="0 0 16 14" fill="none" stroke="#fff" strokeWidth="1.100">
            <path d="M5 1.500H15.500V9.500H3.500V5.500M9.500 9.500V12.500M5.500 12.500H13" />
            <rect x=".6" y=".6" width="4" height="4" />
          </svg>
        </TrayIcons>
        <Clock>
          5:24 PM
          <br />
          10/3/2025
        </Clock>
        <svg width="8" height="1" />
        <svg width="17" height="17" viewBox="0 0 17 17">
          <path d="M.6 1H16.400V13H11.500L8.500 16L5.500 13H.6z" fill="none" stroke="#fff" strokeWidth="1.100" />
        </svg>
        <svg width="1" height="1" />
        <ShowDesktop />
      </Tray>
    </Taskbar>
  );
}

export default function App() {
  return (
    <Screen>
      <GlobalStyle />
      <Beam width="600" height="110">
        <path d="M190 0L545 99" stroke="#3fb8ff" strokeOpacity=".3" strokeWidth="1.500" />
      </Beam>
      <IconGrid>
        {desktopItems.map(item => (
          <DesktopItem key={item.label}>
            {item.icon}
            <DesktopLabel $tight={item.tight}>{item.label}</DesktopLabel>
          </DesktopItem>
        ))}
      </IconGrid>
      <Explorer />
      <TaskBar />
      <Watermark width="206" height="76" fill="#fff" opacity=".55">
        <g fontFamily="Roboto" fontSize="52" fontWeight="500" letterSpacing="0">
          <text x="7" y="58" textLength="66" lengthAdjust="spacingAndGlyphs">ANY</text>
          <text x="139" y="58" textLength="60" lengthAdjust="spacingAndGlyphs">RUN</text>
        </g>
        <path
          d="M91 9L80 18V65L88 60M91 9V56L128 33L91 9M88 60L91 68L137 38V30L98 7M91 68L137 38"
          fill="none"
          stroke="#fff"
          strokeWidth="4"
          strokeLinejoin="round"
        />
      </Watermark>
    </Screen>
  );
}
